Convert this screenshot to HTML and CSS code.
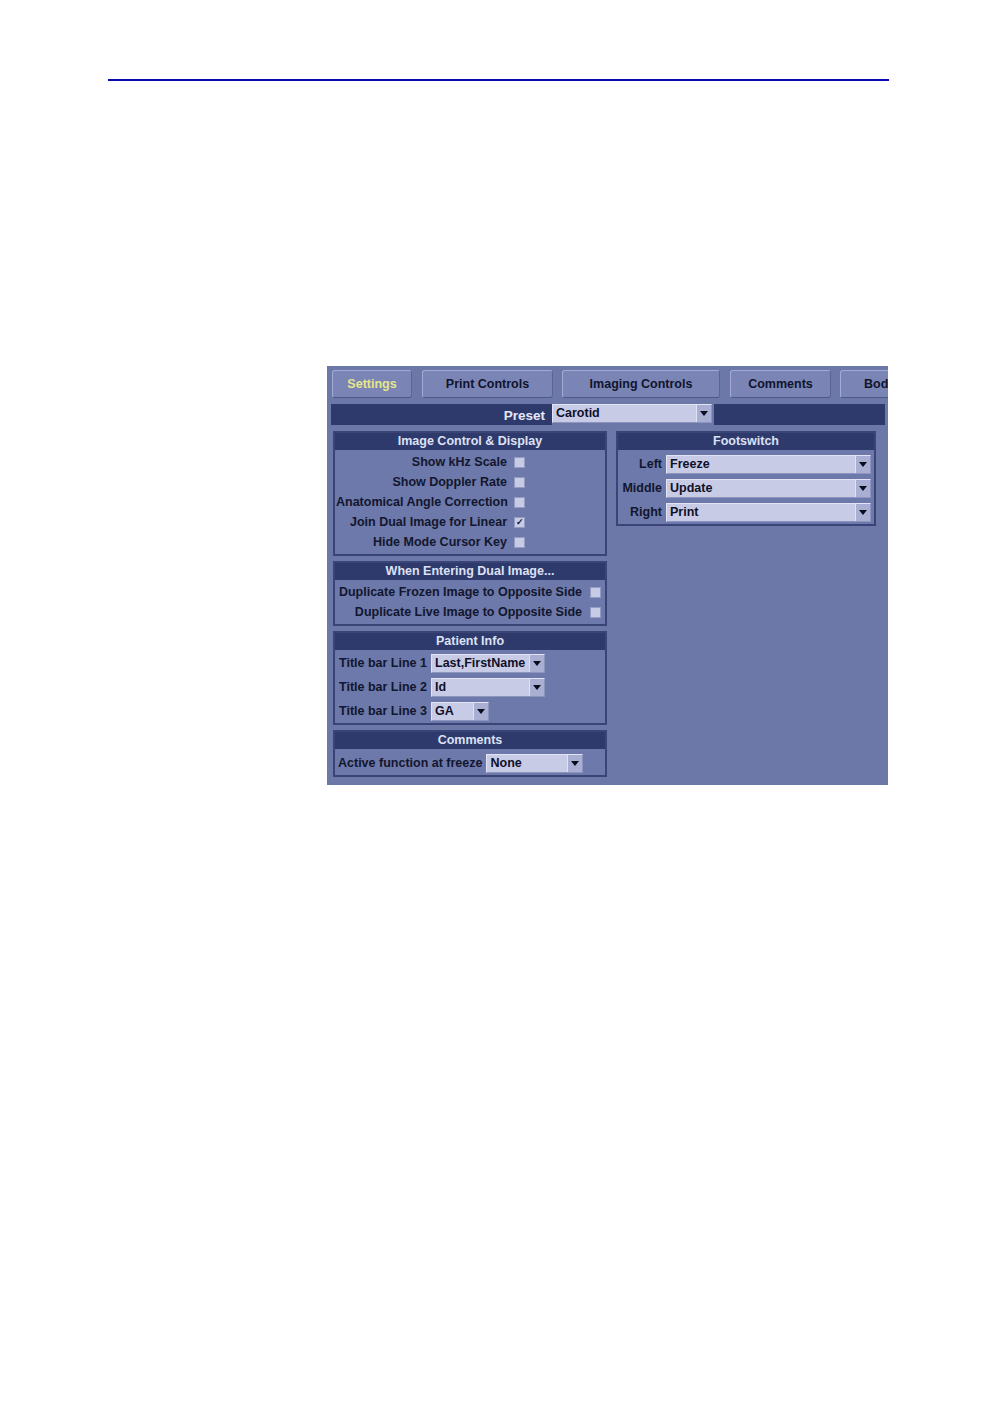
FILE: index.html
```html
<!DOCTYPE html>
<html>
<head>
<meta charset="utf-8">
<link rel="stylesheet" href="styles.css">
</head>
<body>
<div class="page">
  <div class="rule"></div>
  <div class="shot">
    <div class="tabs">
      <div class="tab tab-active w80">Settings</div>
      <div class="tab w131">Print Controls</div>
      <div class="tab w158">Imaging Controls</div>
      <div class="tab w101">Comments</div>
      <div class="tab tab-cut">Bod</div>
    </div>
    <div class="preset">
      <div class="preset-label">Preset</div>
      <div class="sel sel-preset"><span class="sel-val">Carotid</span><span class="arrow"></span></div>
      <div class="preset-fill"></div>
    </div>
    <div class="cols">
      <div class="col col-left">
        <div class="sec">
          <div class="sec-h">Image Control &amp; Display</div>
          <div class="sec-b pad2 checks checks-a">
            <div class="lbl">Show kHz Scale</div><div class="cb"></div>
            <div class="lbl">Show Doppler Rate</div><div class="cb"></div>
            <div class="lbl">Anatomical Angle Correction</div><div class="cb"></div>
            <div class="lbl">Join Dual Image for Linear</div><div class="cb cb-on">✓</div>
            <div class="lbl">Hide Mode Cursor Key</div><div class="cb"></div>
          </div>
        </div>
        <div class="sec">
          <div class="sec-h">When Entering Dual Image...</div>
          <div class="sec-b pad2 checks checks-b">
            <div class="lbl">Duplicate Frozen Image to Opposite Side</div><div class="cb"></div>
            <div class="lbl">Duplicate Live Image to Opposite Side</div><div class="cb"></div>
          </div>
        </div>
        <div class="sec">
          <div class="sec-h">Patient Info</div>
          <div class="sec-b pad1">
            <div class="frow frow-p">
              <div class="flbl">Title bar Line 1</div>
              <div class="sel w114"><span class="sel-val">Last,FirstName</span><span class="arrow"></span></div>
            </div>
            <div class="frow frow-p">
              <div class="flbl">Title bar Line 2</div>
              <div class="sel w114"><span class="sel-val">Id</span><span class="arrow"></span></div>
            </div>
            <div class="frow frow-p">
              <div class="flbl">Title bar Line 3</div>
              <div class="sel w58"><span class="sel-val">GA</span><span class="arrow"></span></div>
            </div>
          </div>
        </div>
        <div class="sec">
          <div class="sec-h">Comments</div>
          <div class="sec-b pad2t">
            <div class="frow frow-c">
              <div class="flbl">Active function at freeze</div>
              <div class="sel w97"><span class="sel-val">None</span><span class="arrow"></span></div>
            </div>
          </div>
        </div>
      </div>
      <div class="col col-right">
        <div class="sec">
          <div class="sec-h">Footswitch</div>
          <div class="sec-b pad2t">
            <div class="frow frow-f">
              <div class="flbl flbl-f">Left</div>
              <div class="sel w205"><span class="sel-val">Freeze</span><span class="arrow"></span></div>
            </div>
            <div class="frow frow-f">
              <div class="flbl flbl-f">Middle</div>
              <div class="sel w205"><span class="sel-val">Update</span><span class="arrow"></span></div>
            </div>
            <div class="frow frow-f">
              <div class="flbl flbl-f">Right</div>
              <div class="sel w205"><span class="sel-val">Print</span><span class="arrow"></span></div>
            </div>
          </div>
        </div>
      </div>
    </div>
  </div>
</div>
</body>
</html>
```

FILE: styles.css
```css
html, body {
  margin: 0;
  padding: 0;
  background: #ffffff;
}
body {
  font-family: "Liberation Sans", Arial, sans-serif;
}
.page {
  padding: 79px 0 0 108px;
}
.rule {
  width: 781px;
  height: 2px;
  background: #0a0ab4;
}
.shot {
  margin: 285px 0 0 219px;
  width: 561px;
  height: 419px;
  background: #6c78a8;
  overflow: hidden;
  font-size: 12.5px;
  font-weight: bold;
  color: #12162e;
}

/* tabs */
.tabs {
  display: flex;
  padding: 4px 0 0 5px;
  height: 28px;
  white-space: nowrap;
}
.tab {
  flex-shrink: 0;
  box-sizing: border-box;
  height: 28px;
  line-height: 26px;
  text-align: center;
  background: #7a85b6;
  border: 1px solid #a3abd4;
  border-bottom-color: #4d5888;
  border-right-color: #5a6595;
  border-radius: 3px;
  color: #10142c;
  margin-right: 9px;
}
.tab-active { color: #e6e68a; margin-right: 10px; }
.tab-cut {
  text-align: left;
  padding-left: 23px;
  width: 48px;
  margin-right: 0;
  border-right: none;
  border-top-right-radius: 0;
  border-bottom-right-radius: 0;
}
.w80 { width: 80px; }
.w131 { width: 131px; }
.w158 { width: 158px; margin-right: 10px; }
.w101 { width: 101px; }

/* preset bar */
.preset {
  display: flex;
  margin: 6px 0 0 4px;
  width: 554px;
  height: 21px;
}
.preset-label {
  width: 214px;
  background: #2f3a6c;
  color: #e4e7f6;
  font-size: 13.5px;
  text-align: right;
  line-height: 23px;
  padding-right: 7px;
}
.preset-fill {
  flex: 1;
  background: #2f3a6c;
  margin-left: 2px;
}
.sel-preset {
  width: 160px;
  height: 20px;
}

/* select */
.sel {
  box-sizing: border-box;
  display: flex;
  align-items: stretch;
  height: 19px;
  background: #c8cbe6;
  border: 1px solid #e2e4f4;
  border-right-color: #8d94bd;
  border-bottom-color: #8d94bd;
  flex-shrink: 0;
}
.sel-val {
  flex: 1;
  padding-left: 3px;
  line-height: 17px;
  color: #0e1128;
  overflow: hidden;
  white-space: nowrap;
}
.arrow {
  width: 14px;
  background: #a9afd2;
  border-left: 1px solid #dfe2f2;
  position: relative;
}
.arrow::after {
  content: "";
  position: absolute;
  left: 3px;
  top: 6px;
  border-left: 4px solid transparent;
  border-right: 4px solid transparent;
  border-top: 5px solid #0a0c1c;
}
.w114 { width: 114px; }
.w58 { width: 58px; }
.w97 { width: 97px; }
.w205 { width: 205px; }

/* columns */
.cols {
  display: flex;
  margin: 6px 0 0 6px;
  gap: 9px;
}
.col {
  display: flex;
  flex-direction: column;
  gap: 5px;
}
.col-left { width: 274px; }
.col-right { width: 260px; }

.sec {
  border: 2px solid #3a4477;
  background: #6d79aa;
}
.sec-h {
  height: 17px;
  line-height: 17px;
  background: #2f3a6c;
  color: #dde1f4;
  text-align: center;
}
.sec-b { box-sizing: border-box; }
.pad2 { padding: 2px 0; }
.pad1 { padding: 1px 0 0 0; }
.pad2t { padding: 2px 0 0 0; }

.checks {
  display: grid;
  align-items: center;
  grid-auto-rows: 20px;
  padding-left: 1px;
}
.checks-a { grid-template-columns: 171px 11px; column-gap: 7px; }
.checks-b { grid-template-columns: 246px 11px; column-gap: 8px; }
.lbl {
  text-align: right;
  white-space: nowrap;
  line-height: 20px;
}
.cb {
  box-sizing: border-box;
  width: 11px;
  height: 11px;
  background: #c8cbe6;
  border: 1px solid #959cc4;
  font-size: 9px;
  line-height: 9px;
  text-align: center;
  color: #10142c;
}

.frow {
  display: flex;
  align-items: center;
  height: 24px;
  gap: 4px;
}
.frow-p { padding-left: 4px; }
.frow-c { padding-left: 3px; }
.frow-f { padding-left: 0; }
.flbl {
  white-space: nowrap;
}
.flbl-f {
  width: 44px;
  text-align: right;
}
```
